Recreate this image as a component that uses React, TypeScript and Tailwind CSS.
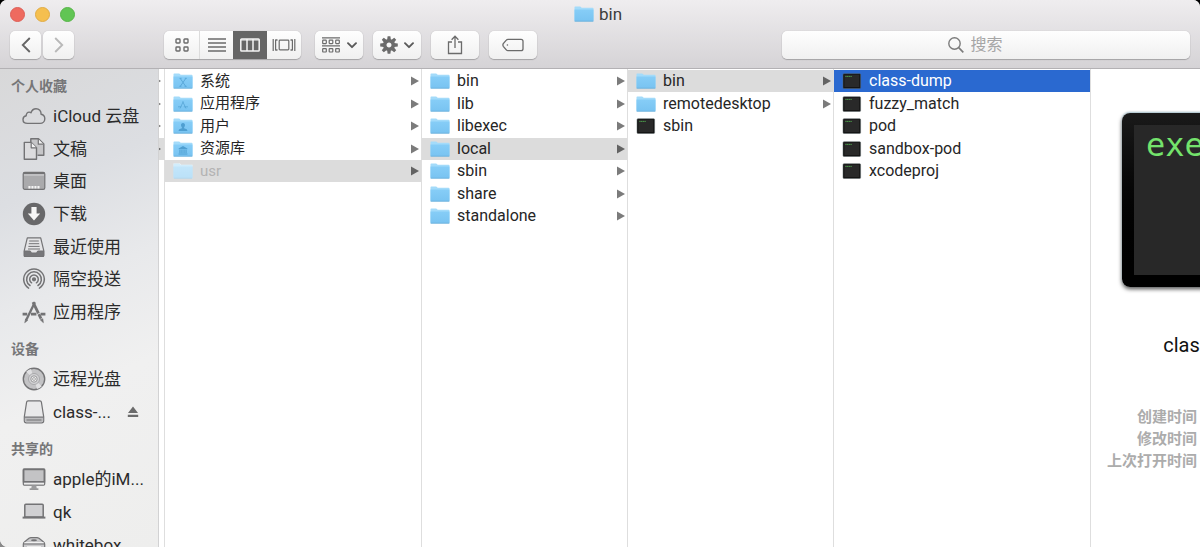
import type { ReactNode } from "react";

const sans = "font-['Roboto','Noto_Sans_CJK_SC',sans-serif]";

/* ---------- small drawings ---------- */

type Glyph = "x" | "apps" | "user" | "library";

function Folder({ glyph, faded }: { glyph?: Glyph; faded?: boolean }) {
  return (
    <svg viewBox="0 0 20 16" className="h-4 w-5 shrink-0" aria-hidden="true">
      <defs>
        <linearGradient id="folderFront" x1="0" y1="0" x2="0" y2="1">
          <stop offset="0" stopColor="#86cdf7" />
          <stop offset="1" stopColor="#78c3f1" />
        </linearGradient>
      </defs>
      {faded && <path d="M.5.4H7l1 1.300h11.500v13.800H.5z" fill="#fff" />}
      <g opacity={faded ? 0.5 : 1}>
        <path d="M.5 1.200Q.5.4 1.300.4H6q.6 0 1 .5l.6.8h11q.9 0 .9.9V14.600H.5z" fill="#a3dbfa" />
        <path d="M.5 3.600h19v11.200q0 .7-.7.7H1.200q-.7 0-.7-.7z" fill="url(#folderFront)" />
        <path d="M.6 15.200h18.800" stroke="#69add6" strokeWidth=".7" />
      </g>
      {glyph === "x" && <path d="M7.200 5.400l5.400 7.800M12.800 5.400l-5.400 7.800M6.600 5.300h2M11.800 5.300h2M6.400 13.300h2M11.600 13.300h2" stroke="#56a5d6" strokeWidth=".9" fill="none" />}
      {glyph === "apps" && <path d="M10.300 5.500l-3.300 7M9.700 5.500l3.300 7M5 10.800h3.400M10.800 10.800H15" stroke="#56a5d6" strokeWidth=".8" fill="none" />}
      {glyph === "user" && <path d="M10 5c1.400 0 2.100 1 2 2.300-.1 1-.5 1.600-.9 2v.9l2.600 1q.7.4.7 1.900H5.600q0-1.500.7-1.900l2.600-1v-.9c-.4-.4-.8-1-.9-2C7.900 6 8.600 5 10 5z" fill="#4f9fd1" />}
      {glyph === "library" && (
        <path d="M5.600 7.400L10 5l4.400 2.400v.8H5.600zM6.400 8.800h1.100v3.200H6.400zM8.400 8.800h1.100v3.200H8.400zM10.500 8.800h1.100v3.200h-1.100zM12.500 8.800h1.100v3.200h-1.100zM5.600 12.500h8.800v1H5.600z" fill="#4f9fd1" />
      )}
    </svg>
  );
}

function Terminal() {
  return (
    <svg viewBox="0 0 20 16" className="h-4 w-5 shrink-0" aria-hidden="true">
      <rect x="1" y=".7" width="17.600" height="14.800" rx="1" fill="#151515" stroke="#5b6467" strokeWidth=".5" />
      <rect x="2.400" y="2" width="14.800" height="12" fill="#292929" />
      <path d="M3.300 3.400h6.600" stroke="#4c9a4a" strokeWidth="1" strokeDasharray="1.400 .3" />
    </svg>
  );
}

function Arrow({ dark }: { dark?: boolean }) {
  return (
    <svg viewBox="0 0 8 10" className="h-[10px] w-2 shrink-0" aria-hidden="true">
      <path d="M0 .4L8 5 0 9.600z" fill={dark ? "#636363" : "#7b7b7b"} />
    </svg>
  );
}

function SideSvg({ children }: { children: ReactNode }) {
  return (
    <svg viewBox="0 0 24 24" className="size-6 shrink-0" fill="none" stroke="#737375" strokeWidth="1.200" strokeLinejoin="round" aria-hidden="true">
      {children}
    </svg>
  );
}

const icons: Record<string, ReactNode> = {
  cloud: (
    <SideSvg>
      <path d="M5.500 19.400C2.800 19.400 1 17.700 1 15.500c0-2 1.400-3.400 3.200-3.700-.1-2.300 1.300-3.700 3-3.700.7 0 1.300.2 1.800.6C9.800 6.300 11.600 4.700 14 4.700c3.200 0 5.200 2.400 5.100 5.500 2.300.4 3.700 2.200 3.700 4.500 0 2.700-2 4.700-4.700 4.700z" strokeWidth="1.400" />
    </SideSvg>
  ),
  docs: (
    <SideSvg>
      <path d="M8.800 5V1.700h7.700l5.300 5.300v11.200h-6.300" fill="#c6c6c8" strokeWidth="1.400" />
      <path d="M16.300 1.900v5.300h5.300" fill="#f2f2f2" />
      <path d="M2.300 5.400h6.900l5.300 5.300v11.600H2.300z" fill="#dcdcde" strokeWidth="1.400" />
      <path d="M9.200 5.500v5.300h5.300" fill="#f4f4f4" />
    </SideSvg>
  ),
  desktop: (
    <SideSvg>
      <rect x="1.200" y="3.400" width="21.600" height="17" rx="1.600" fill="#aaaaac" />
      <path d="M2 6h20" stroke="#d6d6d8" strokeWidth="1.200" />
      <path d="M1.600 4.400h20.800" strokeWidth="1.400" />
      <path d="M6.400 18.200h11.200" stroke="#f4f4f4" strokeWidth="2.400" strokeDasharray="2.100 .9" />
    </SideSvg>
  ),
  download: (
    <SideSvg>
      <circle cx="12" cy="12" r="11.200" fill="#68686a" stroke="none" />
      <path d="M9.400 5h5.200v6.600h3.600L12 18.600 5.800 11.600h3.600z" fill="#f6f6f6" stroke="none" />
    </SideSvg>
  ),
  recent: (
    <SideSvg>
      <path d="M5.300 2.800h13.400l3 12.600v5.100q0 1-1 1H3.300q-1 0-1-1v-5.100z" fill="#e4e4e6" />
      <path d="M2.300 16h5.400c.8 0 .9 2 2 2h4.600c1.100 0 1.200-2 2-2h5.400v4.500q0 1-1 1H3.300q-1 0-1-1z" fill="#77777a" />
      <path d="M7.200 6h9.600M6.800 8.700h10.400M6.400 11.400h11.200M6 14h12" strokeWidth="1" />
    </SideSvg>
  ),
  airdrop: (
    <SideSvg>
      <circle cx="12" cy="12.300" r="1.500" fill="#737375" />
      <path d="M9.600 15.800a4.300 4.300 0 1 1 4.800 0M8 18.500a7.400 7.400 0 1 1 8 0M6.600 21.100a10.300 10.300 0 1 1 10.800 0" strokeWidth="1.500" strokeLinecap="round" />
    </SideSvg>
  ),
  apps: (
    <SideSvg>
      <path d="M12.900 2.200L4 20.600" strokeWidth="2.300" />
      <path d="M11 2.200l8 16.400" strokeWidth="2.800" strokeDasharray="12.500 .7 8" />
      <path d="M3.600 19l-.9 3.700 2.900-2.200zM18.200 19.800l3.200 2.900-.6-4z" fill="#737375" strokeWidth=".6" />
      <path d="M.6 14.200h4.600M9 14.200h5.400M18.600 14.200h4.800" strokeWidth="2.800" />
    </SideSvg>
  ),
  disc: (
    <SideSvg>
      <circle cx="12" cy="12" r="10.700" fill="#c3c3c5" strokeWidth="1.400" />
      <path d="M12 12L4.200 4.800A10.300 10.300 0 0 1 9 2zM12 12l7.800 7.200A10.300 10.300 0 0 1 15 22z" fill="#e0e0e2" stroke="none" />
      <circle cx="12" cy="12" r="5.500" fill="#d3d3d5" stroke="#a0a0a2" strokeWidth=".8" />
      <circle cx="12" cy="12" r="3.200" fill="#f0f0f0" stroke="#909092" strokeWidth=".9" />
      <circle cx="12" cy="12" r="1.400" fill="#fafafa" stroke="#909092" strokeWidth=".8" />
    </SideSvg>
  ),
  drive: (
    <SideSvg>
      <path d="M4.600 2.200q.2-1.300 1.500-1.300h11.800q1.300 0 1.500 1.300l2.300 14.600v4q0 2-2 2H4.300q-2 0-2-2v-4z" fill="#e9e9ea" />
      <path d="M2.900 17.400h18.200v3.200q0 1.600-1.600 1.600h-15q-1.600 0-1.600-1.600z" fill="#bcbcbe" stroke="none" />
      <path d="M2.600 17.200h18.800M4.500 20h15" />
    </SideSvg>
  ),
  imac: (
    <SideSvg>
      <rect x="1.300" y="2" width="21.400" height="16.200" rx="1.200" fill="#c3c3c5" />
      <rect x="1.600" y="2.300" width="20.800" height="12.600" strokeWidth="1.700" />
      <path d="M2 16.600h20" stroke="#ececec" strokeWidth="1.600" />
      <path d="M9.800 18.600h4.400l.6 3H9.200z" fill="#9c9c9e" stroke="none" />
      <path d="M7.600 22.100h8.800" />
    </SideSvg>
  ),
  laptop: (
    <SideSvg>
      <path d="M2.800 17V5.200q0-1 1-1h16.400q1 0 1 1V17z" fill="#d0d0d2" strokeWidth="1.500" />
      <path d="M.6 17.600h22.800" strokeWidth="2" />
    </SideSvg>
  ),
  capsule: (
    <SideSvg>
      <path d="M7 5.200q1-.6 2-.6h6q1 0 2 .6l4.600 3.800q1.100.9 1.100 2.300V20H1.300v-8.700q0-1.400 1.100-2.300z" fill="#c9c9cb" />
      <path d="M2.400 9.600h19.200" stroke="#f0f0f0" strokeWidth="1.400" />
      <path d="M1.600 11h20.800" />
      <ellipse cx="12" cy="7.200" rx="3" ry="1" fill="#737375" stroke="none" />
      <path d="M5 14h14" stroke="#f4f4f4" strokeWidth="1.600" />
    </SideSvg>
  ),
};

/* ---------- toolbar ---------- */

const raised = "bg-linear-to-b from-[#fefefe] to-[#f0f0f0] shadow-[0_0_1px_rgba(0,0,0,0.25),0_1px_1px_rgba(0,0,0,0.22)]";

function ToolButton({ label, className, children }: { label: string; className: string; children: ReactNode }) {
  return (
    <button type="button" aria-label={label} className={`flex h-7 items-center justify-center rounded-[5px] ${raised} ${className}`}>
      {children}
    </button>
  );
}

function Chevron() {
  return (
    <svg viewBox="0 0 10 7" className="h-[7px] w-[10px]" fill="none" stroke="#5a5a5a" strokeWidth="1.900" strokeLinecap="round" strokeLinejoin="round">
      <path d="M1 1.200l4 4 4-4" />
    </svg>
  );
}

function Gear() {
  return (
    <svg viewBox="-9 -9 18 18" className="size-[18px]">
      <g fill="#6b6b6b">
        {[0, 45, 90, 135, 180, 225, 270, 315].map((a) => (
          <path key={a} d="M-1.900-5L-1.400-8.800H1.400L1.900-5z" transform={`rotate(${a})`} />
        ))}
      </g>
      <circle r="4.300" fill="none" stroke="#6b6b6b" strokeWidth="3.600" />
    </svg>
  );
}

function Toolbar() {
  return (
    <div className="flex items-center px-[10px]">
      <div className="flex gap-[2px]">
        <ToolButton label="后退" className="w-[31px]">
          <svg viewBox="0 0 10 16" className="h-4 w-[10px]" fill="none" stroke="#666" strokeWidth="1.900"><path d="M8.800 1L1.800 8l7 7" /></svg>
        </ToolButton>
        <ToolButton label="前进" className="w-[31px]">
          <svg viewBox="0 0 10 16" className="h-4 w-[10px]" fill="none" stroke="#b9b9b9" strokeWidth="1.900"><path d="M1.200 1l7 7-7 7" /></svg>
        </ToolButton>
      </div>

      <div className={`ml-[90px] flex h-7 shrink-0 rounded-[5px] ${raised}`}>
        <button type="button" aria-label="图标" className="flex w-9 items-center justify-center border-r border-[#dcdcdc] pl-px">
          <svg viewBox="0 0 14 14" className="size-[14px]" fill="none" stroke="#6b6b6b" strokeWidth="1.400">
            <rect x="1" y="1" width="4" height="4" rx=".7" /><rect x="9" y="1" width="4" height="4" rx=".7" />
            <rect x="1" y="9" width="4" height="4" rx=".7" /><rect x="9" y="9" width="4" height="4" rx=".7" />
          </svg>
        </button>
        <button type="button" aria-label="列表" className="flex w-[33px] items-center justify-center">
          <svg viewBox="0 0 18 14" className="h-[14px] w-[18px]" stroke="#6b6b6b" strokeWidth="1.300"><path d="M0 1h18M0 5h18M0 9h18M0 13h18" /></svg>
        </button>
        <button type="button" aria-label="分栏" aria-pressed="true" className="flex w-[34px] items-center justify-center bg-[#666]">
          <svg viewBox="0 0 20 14" className="h-[14px] w-5" fill="none" stroke="#f4f4f4" strokeWidth="1.500"><rect x=".8" y="1" width="18.400" height="12" rx=".8" /><path d="M7 1v12M13 1v12" /><path d="M.8 2h18.400" strokeWidth="1" /></svg>
        </button>
        <button type="button" aria-label="Cover Flow" className="flex w-[34px] items-center justify-center">
          <svg viewBox="0 0 24 14" className="h-[14px] w-6" fill="none" stroke="#6b6b6b" strokeWidth="1.200">
            <path d="M1.200 1v12M22.800 1v12" /><path d="M3.300 1.800h1.600v1M3.600 1.800v10.400M3.300 12.200h1.600v-1M20.700 1.800h-1.600v1M20.400 1.800v10.400M20.700 12.200h-1.600v-1" /><rect x="7.200" y="2.200" width="9.600" height="9.600" rx=".8" />
          </svg>
        </button>
      </div>

      <div className="ml-[14px] flex gap-[10px]">
        <ToolButton label="排列" className="w-12 gap-[7px]">
          <svg viewBox="0 0 18 16" className="h-4 w-[18px]" fill="none" stroke="#6b6b6b" strokeWidth="1.200">
            <path d="M0 .8h18M0 8.800h18" />
            <rect x=".7" y="3.200" width="3.600" height="3.400" rx=".5" /><rect x="7.200" y="3.200" width="3.600" height="3.400" rx=".5" /><rect x="13.700" y="3.200" width="3.600" height="3.400" rx=".5" />
            <rect x=".7" y="11.600" width="3.600" height="3.400" rx=".5" /><rect x="7.200" y="11.600" width="3.600" height="3.400" rx=".5" /><rect x="13.700" y="11.600" width="3.600" height="3.400" rx=".5" />
          </svg>
          <Chevron />
        </ToolButton>
        <ToolButton label="操作" className="w-12 gap-[6px]"><Gear /><Chevron /></ToolButton>
        <ToolButton label="共享" className="w-12">
          <svg viewBox="0 0 16 20" className="h-5 w-4" fill="none" stroke="#6b6b6b" strokeWidth="1.300"><path d="M5 7H1.500v11.500h13V7H11M8 13V1.500M4.600 4.800L8 1.300l3.400 3.500" /></svg>
        </ToolButton>
        <ToolButton label="编辑标记" className="w-12">
          <svg viewBox="0 0 22 14" className="h-[14px] w-[22px]" fill="none" stroke="#6b6b6b" strokeWidth="1.300"><path d="M6 1.300h13q2 0 2 2v7.400q0 2-2 2H6q-1 0-1.700-.9L1.300 8.300Q.5 7 1.300 5.700l3-3.500Q5 1.300 6 1.300z" /><circle cx="5.400" cy="7" r=".8" fill="#6b6b6b" stroke="none" /></svg>
        </ToolButton>
      </div>

      <label className={`ml-auto flex h-7 w-[408px] items-center justify-center gap-[7px] rounded-[5px] ${raised}`}>
        <svg viewBox="0 0 16 16" className="size-4" fill="none" stroke="#7c7c7c" strokeWidth="1.400" aria-hidden="true"><circle cx="6.500" cy="6.500" r="5.700" /><path d="M10.700 10.700l4.600 4.600" strokeWidth="1.700" /></svg>
        <input type="search" aria-label="搜索" placeholder="搜索" className="w-[54px] bg-transparent text-base outline-none placeholder:text-[#a6a6a6]" />
      </label>
    </div>
  );
}

/* ---------- sidebar ---------- */

type Place = { name: string; icon: string; eject?: boolean };

function Group({ title, rows, places }: { title: string; rows: string; places: Place[] }) {
  return (
    <section className="shrink-0">
      <h2 className="pl-[11px] text-sm leading-[26px] font-bold text-[#767678]">{title}</h2>
      <ul className={`mt-px grid ${rows}`}>
        {places.map((p) => (
          <li key={p.name} className="flex items-center pr-[19px] pl-[22px]">
            <a href="#" className="flex items-center gap-[7px] text-[17px] leading-6 whitespace-nowrap text-[#2b2b2b]">
              {icons[p.icon]}
              {p.name}
            </a>
            {p.eject && (
              <button type="button" aria-label="推出" className="ml-auto">
                <svg viewBox="0 0 12 12" className="size-3" fill="#6b6b6b"><path d="M6 .6L11 7H1zM.8 8.800h10.400V11H.8z" /></svg>
              </button>
            )}
          </li>
        ))}
      </ul>
    </section>
  );
}

/* ---------- columns ---------- */

type Entry = { name: string; glyph?: Glyph; exec?: boolean; faded?: boolean; state?: "path" | "active" };

function Column({ width, label, text = "text-base", entries }: { width: string; label: string; text?: string; entries: Entry[] }) {
  return (
    <section aria-label={label} className={`shrink-0 border-r border-[#dedede] pt-px ${width}`}>
      <ul className="grid h-[158px] grid-rows-7">
        {entries.map((e) => (
          <li key={e.name} className="flex">
            <button
              type="button"
              className={`flex h-[22px] w-full items-center gap-[7px] pr-[2px] pl-2 text-left ${text} ${
                e.state === "active" ? "bg-[#2a69d0] text-white" : e.state === "path" ? "bg-[#dcdcdc]" : ""
              } ${e.faded ? "text-[#b3b3b3]" : e.state === "active" ? "" : "text-[#262626]"}`}
            >
              {e.exec ? <Terminal /> : <Folder glyph={e.glyph} faded={e.faded} />}
              <span className="grow">{e.name}</span>
              {!e.exec && <Arrow dark={e.state === "path"} />}
            </button>
          </li>
        ))}
      </ul>
    </section>
  );
}

export default function App() {
  return (
    <div className={`h-screen overflow-hidden bg-linear-to-b from-black to-[#8a8a8a] ${sans}`}>
      <div className="flex h-full flex-col overflow-hidden rounded-t-[7px] rounded-bl-[8px] bg-white">
        <header className="shrink-0 border-b border-[#b3b1b4] bg-linear-to-b from-[#efedef] to-[#d5d3d6] pb-[9px]">
          <div className="grid h-[31px] grid-cols-[1fr_auto_1fr] items-center pb-[3px]">
            <div className="flex gap-[10px] pl-[10px]">
              <button type="button" aria-label="关闭" className="size-[15px] rounded-full border border-[#dd5f57] bg-[#ee6a5f]" />
              <button type="button" aria-label="最小化" className="size-[15px] rounded-full border border-[#e0ab45] bg-[#f5bf4f]" />
              <button type="button" aria-label="缩放" className="size-[15px] rounded-full border border-[#57b548] bg-[#61c554]" />
            </div>
            <h1 className="flex items-center gap-[5px] pr-1 text-[17px] leading-6 text-[#3c3c3c]"><Folder />bin</h1>
          </div>
          <Toolbar />
        </header>

        <main className="flex min-h-0 grow overflow-hidden">
          <nav aria-label="边栏" className="flex w-[159px] shrink-0 flex-col gap-[8px] overflow-hidden border-r border-[#d2d2d3] bg-[linear-gradient(155deg,#d8d8d9_0%,#dcdee2_25%,#e8e9eb_45%,#f0f0f0_65%,#eeeeed_100%)] pt-1">
            <Group title="个人收藏" rows="h-[228px] grid-rows-7" places={[
              { name: "iCloud 云盘", icon: "cloud" },
              { name: "文稿", icon: "docs" },
              { name: "桌面", icon: "desktop" },
              { name: "下载", icon: "download" },
              { name: "最近使用", icon: "recent" },
              { name: "隔空投送", icon: "airdrop" },
              { name: "应用程序", icon: "apps" },
            ]} />
            <Group title="设备" rows="h-[65px] grid-rows-2" places={[
              { name: "远程光盘", icon: "disc" },
              { name: "class-...", icon: "drive", eject: true },
            ]} />
            <Group title="共享的" rows="h-[98px] grid-rows-3" places={[
              { name: "apple的iM...", icon: "imac" },
              { name: "qk", icon: "laptop" },
              { name: "whitebox...", icon: "capsule" },
            ]} />
          </nav>

          <div className="w-[6px] shrink-0 border-r border-[#dedede] pt-px" aria-hidden="true">
            <div className="grid h-[158px] grid-rows-7">
              {[0, 1, 2, 3].map((i) => (
                <div key={i} className={`flex h-[22px] items-center justify-end overflow-hidden pr-[3px] ${i === 3 ? "bg-[#dcdcdc]" : ""}`}>
                  <Arrow dark={i === 3} />
                </div>
              ))}
            </div>
          </div>

          <Column width="w-[257px]" label="根目录" text="text-[15px]" entries={[
            { name: "系统", glyph: "x" },
            { name: "应用程序", glyph: "apps" },
            { name: "用户", glyph: "user" },
            { name: "资源库", glyph: "library" },
            { name: "usr", faded: true, state: "path" },
          ]} />
          <Column width="w-[206px]" label="usr" entries={[
            { name: "bin" }, { name: "lib" }, { name: "libexec" }, { name: "local", state: "path" },
            { name: "sbin" }, { name: "share" }, { name: "standalone" },
          ]} />
          <Column width="w-[206px]" label="local" entries={[
            { name: "bin", state: "path" }, { name: "remotedesktop" }, { name: "sbin", exec: true },
          ]} />
          <Column width="w-[257px]" label="bin" entries={[
            { name: "class-dump", exec: true, state: "active" },
            { name: "fuzzy_match", exec: true },
            { name: "pod", exec: true },
            { name: "sandbox-pod", exec: true },
            { name: "xcodeproj", exec: true },
          ]} />

          <aside className="flex w-[248px] shrink-0 flex-col pt-[44px]">
            <div className="mx-[31px] h-[174px] rounded-[8px] bg-linear-to-b from-[#1a1a1a] to-black p-[12px] shadow-[0_-1px_2px_#a9c4cf,0_2px_4px_rgba(0,0,0,0.7)]">
              <div className="h-full bg-[#282828] pt-px pl-3 font-['DejaVu_Sans_Mono',monospace] text-[32px] leading-[38px] text-[#74e36c]">exec</div>
            </div>
            <h2 className="mt-[44px] text-center text-xl leading-7 text-[#111]">class-dump</h2>
            <dl className="mt-[47px] w-[106px] text-right text-[15px] leading-[22px] font-bold text-[#acacac]">
              <dt>创建时间</dt>
              <dt>修改时间</dt>
              <dt>上次打开时间</dt>
            </dl>
          </aside>
        </main>
      </div>
    </div>
  );
}
